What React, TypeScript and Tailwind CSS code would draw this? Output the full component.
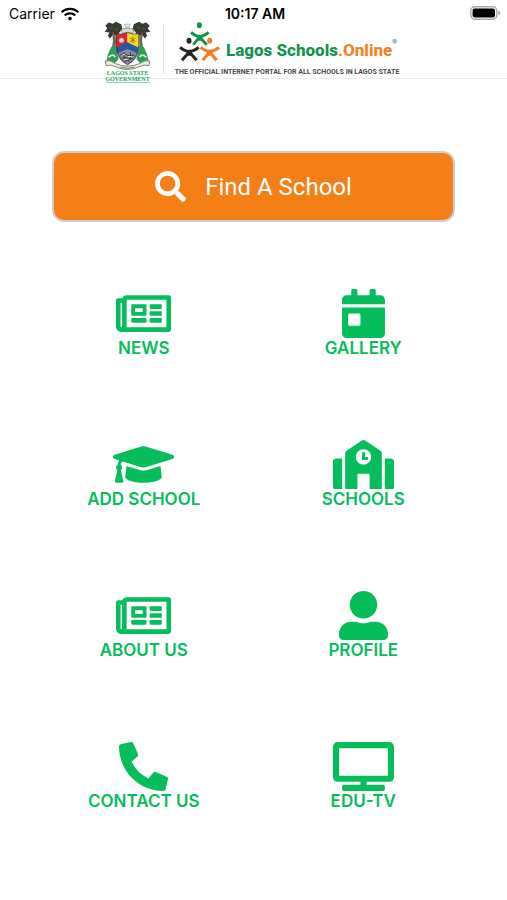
import React from 'react';
import type { IconType } from 'react-icons';
import {
  FaCalendarDay,
  FaGraduationCap,
  FaPhoneAlt,
  FaRegNewspaper,
  FaSchool,
  FaSearch,
  FaTv,
  FaUserAlt,
  FaWifi,
} from 'react-icons/fa';

interface MenuEntry {
  id: string;
  label: string;
  icon: IconType;
}

const menu: MenuEntry[] = [
  { id: 'news', label: 'NEWS', icon: FaRegNewspaper },
  { id: 'gallery', label: 'GALLERY', icon: FaCalendarDay },
  { id: 'add-school', label: 'ADD SCHOOL', icon: FaGraduationCap },
  { id: 'schools', label: 'SCHOOLS', icon: FaSchool },
  { id: 'about', label: 'ABOUT US', icon: FaRegNewspaper },
  { id: 'profile', label: 'PROFILE', icon: FaUserAlt },
  { id: 'contact', label: 'CONTACT US', icon: FaPhoneAlt },
  { id: 'edu-tv', label: 'EDU-TV', icon: FaTv },
];

const StatusBar = () => (
  <div className="grid h-5 grid-cols-3 items-start pr-1.5 pl-[9px] pt-1 text-sm/5 text-black">
    <div className="flex items-center gap-1.5">
      <span>Carrier</span>
      <FaWifi className="h-4 w-[18px]" />
    </div>
    <span className="text-center font-semibold">10:17 AM</span>
    <div className="flex h-[18px] items-center justify-end">
      <svg viewBox="0 0 31 14" className="h-3.5 w-[31px]" aria-label="Battery full">
        <rect x="0.8" y="0.8" width="26" height="12.4" rx="4" fill="#fff" stroke="#a9a9a9" strokeWidth="1.4" />
        <rect x="2.6" y="2.6" width="22.4" height="8.8" rx="2" fill="#000" />
        <path d="M28.3 4.8q2 .6 2 2.2t-2 2.2z" fill="#a9a9a9" />
      </svg>
    </div>
  </div>
);

// Coat of arms: palms, quartered shield, ribbon
const Crest = () => (
  <svg viewBox="28 18 142 147" className="mt-px h-[49px] w-[47px]" aria-hidden="true">
    <path d="M58 60Q64 95 44 124M140 60Q134 95 154 124" fill="none" stroke="#5d6b58" strokeWidth="9" />
    <g fill="#2c3f31">
      <path d="M32 32L42 22L54 26L64 20L80 27L84 42L76 50L68 62L56 58L46 70L40 62L44 52L30 50L38 40z" />
      <path d="M166 32L156 22L144 26L134 20L118 27L114 42L122 50L130 62L142 58L152 70L158 62L154 52L168 50L160 40z" />
    </g>
    <g fill="#8f2f34">
      <circle cx="50" cy="38" r="4" />
      <circle cx="66" cy="43" r="4" />
      <circle cx="55" cy="54" r="4" />
      <circle cx="132" cy="38" r="4" />
      <circle cx="148" cy="41" r="4" />
      <circle cx="143" cy="54" r="4" />
    </g>
    <path d="M90 27h18l-4 10H94z" fill="#e2e4e2" stroke="#aaa" strokeWidth="2" />
    <path d="M80 44Q99 34 118 44L116 54H82z" fill="#d5d8d5" stroke="#777" strokeWidth="2" />
    <path d="M50 96L64 92L72 132L60 146L34 142Q38 116 50 96z" fill="#2f9c57" />
    <path d="M148 96L134 92L126 132L138 146L164 142Q160 116 148 96z" fill="#2f9c57" />
    <path d="M42 128q12-14 20-2M156 128q-12-14-20-2" fill="none" stroke="#e4f0e3" strokeWidth="5" />
    <path d="M65 56Q82 60 99 52V98L66 112Q61 82 65 56z" fill="#d8242d" />
    <path d="M99 52Q116 60 133 56Q137 82 132 112L99 98z" fill="#f4d719" />
    <path d="M66 108Q70 138 99 150Q128 138 132 108L99 90z" fill="#8b8f95" />
    <path d="M65 98L99 82L133 98L131 116L99 102L67 116z" fill="#2856a8" />
    <path d="M65 56Q82 60 99 52Q116 60 133 56Q140 128 99 150Q58 128 65 56z" fill="none" stroke="#3b3b3b" strokeWidth="2.5" />
    <circle cx="81" cy="76" r="8" fill="#e9cbcb" stroke="#777" strokeWidth="2" />
    <path d="M115 65v19M107 69l16 11M123 69l-16 11" stroke="#987b16" strokeWidth="3" />
    <path d="M77 120q10-7 20 0t23 0M82 130q9-6 18 0t16 0M91 139q8-4 15 0M89 112v20M108 112v22" fill="none" stroke="#34383d" strokeWidth="3" />
    <path d="M83 119h9M100 125h13M90 134h9" stroke="#dfe2e5" strokeWidth="3" />
    <path d="M32 138Q46 134 62 146Q99 162 136 146Q152 134 166 138L164 152Q148 148 134 156Q99 172 64 156Q50 148 34 152z" fill="#efeee2" stroke="#82826f" strokeWidth="3" />
    <path d="M78 157q21 6 42 0" fill="none" stroke="#777" strokeWidth="3" />
  </svg>
);

const PeopleLogo = () => (
  <svg viewBox="14 12 123 120" className="h-10 w-[41px]" aria-hidden="true" fill="none" strokeWidth="9">
    <g stroke="#12934a">
      <ellipse cx="75" cy="22" rx="7.5" ry="9" fill="#12934a" stroke="none" />
      <path d="M50 43Q64 55 76 55Q88 55 103 43" />
      <path d="M57 80L76 57L97 80" />
      <path d="M66 52h20l-4 16h-12z" fill="#12934a" stroke="none" />
    </g>
    <g stroke="#252525">
      <ellipse cx="44" cy="68" rx="7.5" ry="9" fill="#252525" stroke="none" />
      <path d="M17 88Q32 100 45 100Q58 100 73 88" />
      <path d="M23 127L45 102L67 127" />
      <path d="M35 97h20l-4 16h-12z" fill="#252525" stroke="none" />
    </g>
    <g stroke="#f07f28">
      <ellipse cx="106" cy="68" rx="7.5" ry="9" fill="#f07f28" stroke="none" />
      <path d="M79 88Q94 100 106 100Q120 100 134 88" />
      <path d="M85 127L106 102L127 127" />
      <path d="M96 97h20l-4 16h-12z" fill="#f07f28" stroke="none" />
    </g>
  </svg>
);

const Header = () => (
  <header className="flex h-[59px] justify-center border-b border-[#ededed]">
    <div className="flex h-16 w-[47px] flex-col items-center font-['Liberation_Serif',serif] text-[#27a35d]">
      <Crest />
      <span className="text-[6px]/[6px] font-bold whitespace-nowrap">LAGOS STATE</span>
      <span className="text-[6px]/[6px] font-bold">GOVERNMENT</span>
      <span className="h-px w-11 bg-[#27a35d]/50" />
    </div>
    <div className="mt-1 ml-3 h-[50px] w-px bg-[#e5e5e5]" />
    <div className="ml-[7px] w-[232px]">
      <div className="flex h-12 items-start">
        <div className="ml-2 pt-0.5">
          <PeopleLogo />
        </div>
        <div className="ml-1.5 flex items-start pt-[18px] whitespace-nowrap">
          <h1 className="font-['Roboto',sans-serif] text-[17px]/6 font-extrabold text-[#12934a]">
            Lagos Schools<span className="text-[#f08326]">.Online</span>
          </h1>
          <span className="text-[7px]/[10px] text-gray-500">®</span>
        </div>
      </div>
      <p className="text-center font-['Roboto',sans-serif] text-[7px]/[8px] font-bold whitespace-nowrap text-[#4a4a4a]">
        THE OFFICIAL INTERNET PORTAL FOR ALL SCHOOLS IN LAGOS STATE
      </p>
    </div>
  </header>
);

const MenuButton: React.FC<{ entry: MenuEntry }> = ({ entry }) => {
  const Icon = entry.icon;
  return (
    <button type="button" className="flex cursor-pointer flex-col items-center text-[#05bd5b]">
      <Icon className="h-[49px] w-[61px]" />
      <span className="text-[17px]/5 font-semibold">{entry.label}</span>
    </button>
  );
};

export default function App() {
  return (
    <div className="min-h-screen bg-white font-['Inter',sans-serif]">
      <StatusBar />
      <Header />
      <main>
        <div className="px-[52px] pt-[72px]">
          <button
            type="button"
            className="flex h-[71px] w-full cursor-pointer items-center justify-center gap-[19px] rounded-xl border-2 border-[#cfcfd2] bg-[#f57f17] text-white"
          >
            <FaSearch className="size-[31px]" />
            <span className="font-['Roboto',sans-serif] text-2xl">Find A School</span>
          </button>
        </div>
        <nav className="grid grid-cols-2 gap-y-[82px] px-[34px] pt-[67px] pb-20">
          {menu.map((entry) => (
            <MenuButton key={entry.id} entry={entry} />
          ))}
        </nav>
      </main>
    </div>
  );
}
